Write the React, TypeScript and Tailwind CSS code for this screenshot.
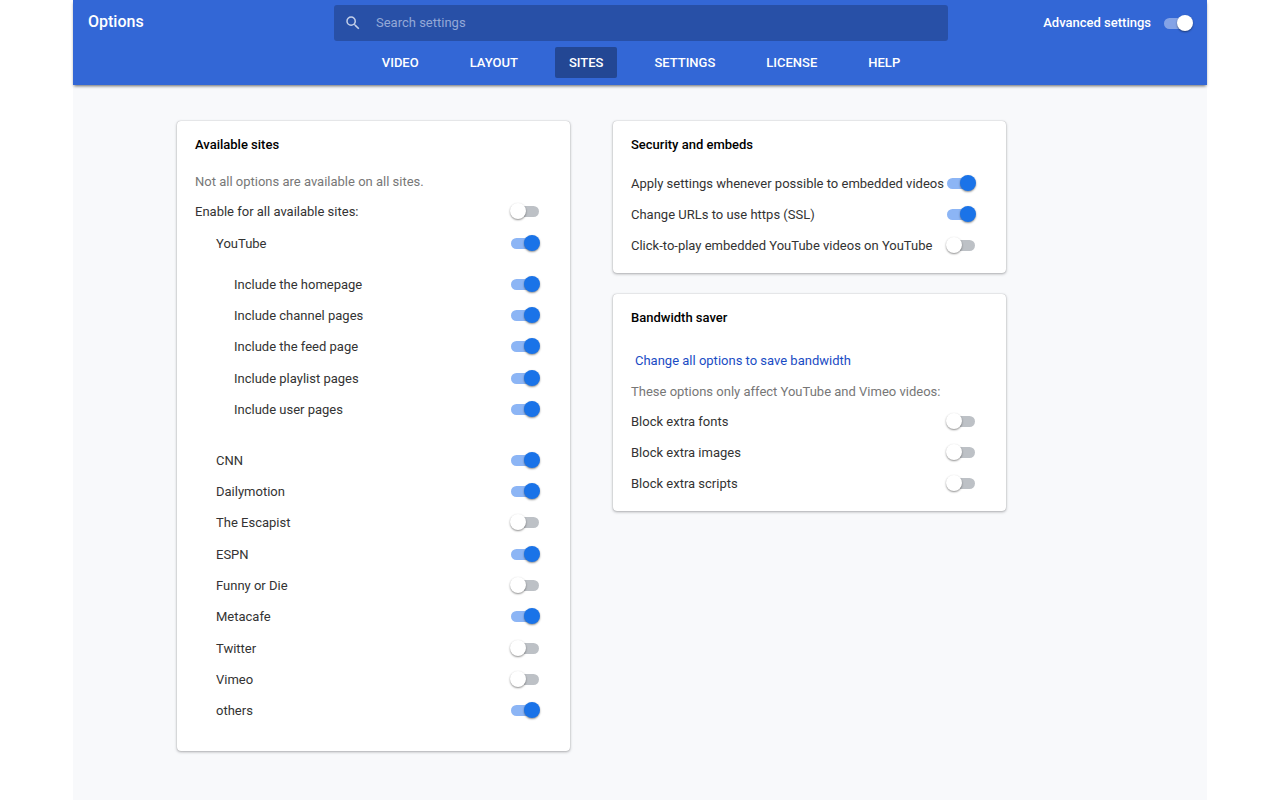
import React, { useState } from 'react';
import { MdSearch } from 'react-icons/md';

type Option = { label: string; on?: boolean };

const tabs = ['Video', 'Layout', 'Sites', 'Settings', 'License', 'Help'];

const youtubePages: Option[] = [
  { label: 'Include the homepage', on: true },
  { label: 'Include channel pages', on: true },
  { label: 'Include the feed page', on: true },
  { label: 'Include playlist pages', on: true },
  { label: 'Include user pages', on: true },
];

const sites: Option[] = [
  { label: 'CNN', on: true },
  { label: 'Dailymotion', on: true },
  { label: 'The Escapist' },
  { label: 'ESPN', on: true },
  { label: 'Funny or Die' },
  { label: 'Metacafe', on: true },
  { label: 'Twitter' },
  { label: 'Vimeo' },
  { label: 'others', on: true },
];

const security: Option[] = [
  { label: 'Apply settings whenever possible to embedded videos', on: true },
  { label: 'Change URLs to use https (SSL)', on: true },
  { label: 'Click-to-play embedded YouTube videos on YouTube' },
];

const bandwidth: Option[] = [
  { label: 'Block extra fonts' },
  { label: 'Block extra images' },
  { label: 'Block extra scripts' },
];

function Toggle({ on = false, light = false }: { on?: boolean; light?: boolean }) {
  const colors = light
    ? 'checked:before:bg-white/40 checked:after:bg-white'
    : 'mb-0.5 checked:before:bg-[#8cb5f5] checked:after:bg-[#1a73e8]';
  return (
    <input
      type="checkbox"
      role="switch"
      defaultChecked={on}
      className={`relative h-4 w-[30px] shrink-0 cursor-pointer appearance-none before:absolute before:inset-x-px before:top-[3px] before:h-[11px] before:rounded-full before:bg-[#bdc1c6] after:absolute after:left-0 after:top-0 after:size-4 after:rounded-full after:bg-white after:shadow-[0_1px_2px_rgba(0,0,0,0.45)] checked:after:left-[14px] ${colors}`}
    />
  );
}

function Row({ label, on }: Option) {
  return (
    <label className="flex h-[31px] items-center justify-between nth-[3n]:mb-px">
      <span>{label}</span>
      <Toggle on={on} />
    </label>
  );
}

function Rows({ options }: { options: Option[] }) {
  return (
    <>
      {options.map((option) => (
        <Row key={option.label} {...option} />
      ))}
    </>
  );
}

function Card({ title, children }: { title: string; children: React.ReactNode }) {
  return (
    <section className="rounded-[4px] bg-white pt-2 pr-[30px] pb-[11px] pl-[18px] shadow-[0_1px_3px_rgba(60,64,67,0.4),0_0_1px_rgba(60,64,67,0.4)]">
      <h2 className="text-[13px] leading-[31px] font-medium text-black">{title}</h2>
      {children}
    </section>
  );
}

export default function App() {
  const [active, setActive] = useState('Sites');

  return (
    <div className="min-h-screen bg-white font-[Roboto,sans-serif] text-[13px] text-[#333]">
      <div className="mx-auto min-h-screen max-w-[1134px] bg-[#f8f9fb]">
        {/* Header */}
        <header className="grid grid-cols-[246px_minmax(0,614px)_1fr] bg-[#3367d6] pt-[5px] pr-[14px] pb-[7px] pl-[15px] text-white shadow-[0_2px_3px_-1px_rgba(0,0,0,0.6)]">
          <h1 className="text-base leading-[34px] font-medium">Options</h1>
          <label className="flex h-9 items-center rounded-[3px] bg-[#2850a7] pr-4 pl-[10px]">
            <MdSearch className="size-[18px] shrink-0 text-[#c4d0ea]" />
            <input
              type="search"
              aria-label="Search settings"
              placeholder="Search settings"
              className="ml-[14px] min-w-0 flex-1 bg-transparent outline-none placeholder:text-[#94a9d7]"
            />
          </label>
          <label className="flex h-9 items-center justify-end gap-3 font-medium">
            <span>Advanced settings</span>
            <Toggle on light />
          </label>
          <nav className="col-start-2 mt-[6px] flex justify-center gap-[23px]">
            {tabs.map((tab) => (
              <button
                key={tab}
                type="button"
                onClick={() => setActive(tab)}
                className={`h-[31px] rounded-[2px] px-[14px] font-medium uppercase ${tab === active ? 'bg-[#234794]' : ''}`}
              >
                {tab}
              </button>
            ))}
          </nav>
        </header>

        {/* Option cards */}
        <main className="grid grid-cols-2 items-start gap-x-[43px] pt-9 pr-[201px] pb-12 pl-[104px]">
          <Card title="Available sites">
            <p className="mt-2 leading-7 text-[#777]">Not all options are available on all sites.</p>
            <Row label="Enable for all available sites:" />
            <div className="mb-3.5 pl-[21px]">
              <Row label="YouTube" on />
              <div className="mt-[10px] mb-5 pl-[18px]">
                <Rows options={youtubePages} />
              </div>
              <div>
                <Rows options={sites} />
              </div>
            </div>
          </Card>

          <div className="flex flex-col gap-[21px]">
            <Card title="Security and embeds">
              <div className="mt-2">
                <Rows options={security} />
              </div>
            </Card>
            <Card title="Bandwidth saver">
              <button type="button" className="mt-3 block h-[31px] px-1 text-[#1a4cc4]">
                Change all options to save bandwidth
              </button>
              <p className="mt-0.5 leading-7 text-[#777]">These options only affect YouTube and Vimeo videos:</p>
              <div>
                <Rows options={bandwidth} />
              </div>
            </Card>
          </div>
        </main>
      </div>
    </div>
  );
}
